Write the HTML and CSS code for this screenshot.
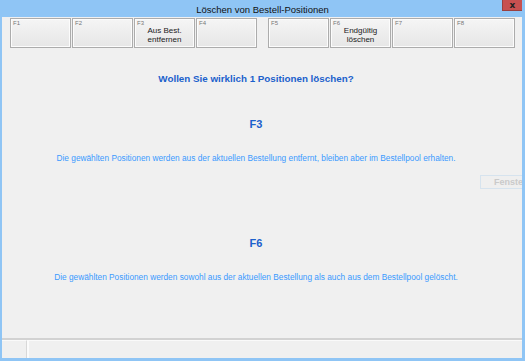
FILE: index.html
```html
<!DOCTYPE html>
<html lang="de">

<head>
    <meta charset="UTF-8">
    <meta name="viewport" content="width=device-width, initial-scale=1.0">
    <title>Löschen von Bestell-Positionen</title>
    <link rel="stylesheet" href="styles.css">
</head>

<body>
    <div class="window">
        <div class="titlebar">
            <span class="title">Löschen von Bestell-Positionen</span>
            <button class="close">x</button>
        </div>

        <div class="keys">
            <button class="key"><span class="fkey">F1</span></button>
            <button class="key"><span class="fkey">F2</span></button>
            <button class="key"><span class="fkey">F3</span><span class="caption">Aus Best.<br>entfernen</span></button>
            <button class="key"><span class="fkey">F4</span></button>
            <button class="key group"><span class="fkey">F5</span></button>
            <button class="key"><span class="fkey">F6</span><span class="caption">Endgültig<br>löschen</span></button>
            <button class="key"><span class="fkey">F7</span></button>
            <button class="key"><span class="fkey">F8</span></button>
        </div>

        <div class="content">
            <h1 class="question">Wollen Sie wirklich 1 Positionen löschen?</h1>
            <h2 class="option">F3</h2>
            <p class="hint">Die gewählten Positionen werden aus der aktuellen Bestellung entfernt, bleiben aber im Bestellpool erhalten.</p>
            <h2 class="option second">F6</h2>
            <p class="hint">Die gewählten Positionen werden sowohl aus der aktuellen Bestellung als auch aus dem Bestellpool gelöscht.</p>
            <button class="fenster" disabled>Fenster</button>
        </div>

        <div class="statusbar">
            <div class="panel small"></div>
            <div class="panel wide"></div>
        </div>
    </div>
</body>

</html>
```

FILE: styles.css
```css
* {
    box-sizing: border-box;
}

body {
    margin: 0;
    padding: 0;
    width: 525px;
    height: 361px;
    overflow: hidden;
    font-family: "Liberation Sans", Arial, sans-serif;
    background-color: #f0f0f0;
}

.window {
    display: flex;
    flex-direction: column;
    width: 525px;
    height: 361px;
    background-color: #f0f0f0;
    border-left: 2px solid #8fc5f5;
    border-right: 3px solid #8fc5f5;
    border-bottom: 3px solid #8fc5f5;
    overflow: hidden;
}

.titlebar {
    display: flex;
    justify-content: center;
    align-items: center;
    position: relative;
    height: 17px;
    margin-left: -2px;
    margin-right: -3px;
    background-color: #8fc5f5;
}

.title {
    font-size: 9.5px;
    color: #111;
    padding-top: 1px;
}

.close {
    position: absolute;
    top: 0;
    right: 2px;
    width: 21px;
    height: 11px;
    padding: 0;
    border: 1px solid #9a4040;
    border-top: none;
    background-color: #c75050;
    color: #222;
    font-family: "DejaVu Sans", sans-serif;
    font-size: 9px;
    font-weight: bold;
    line-height: 9px;
}

.keys {
    display: flex;
    gap: 1px;
    padding: 1px 0 0 8px;
    height: 31px;
}

.key {
    position: relative;
    display: flex;
    justify-content: center;
    align-items: center;
    width: 61px;
    height: 30px;
    padding: 0;
    border: 1px solid #acacac;
    background: linear-gradient(#f5f5f5, #e6e6e6);
    box-shadow: inset 0 0 0 1px #fcfcfc;
}

.key.group {
    margin-left: 10px;
}

.fkey {
    position: absolute;
    top: 1px;
    left: 2px;
    font-size: 6px;
    color: #777;
}

.caption {
    font-size: 8px;
    line-height: 9px;
    color: #1a1a1a;
    padding-top: 4px;
}

.content {
    position: relative;
    flex: 1;
    padding-right: 12px;
    text-align: center;
}

.question {
    margin: 24px 0 0;
    font-size: 9.8px;
    line-height: 14px;
    color: #1b60cc;
}

.option {
    margin: 31px 0 0;
    font-size: 11px;
    line-height: 14px;
    color: #1b60cc;
}

.option.second {
    margin-top: 72px;
}

.hint {
    margin: 21px 0 0;
    font-size: 8.3px;
    line-height: 12px;
    color: #3a9aff;
}

.fenster {
    position: absolute;
    top: 127px;
    left: 478px;
    width: 56px;
    height: 14px;
    padding: 0 0 0 13px;
    text-align: left;
    white-space: nowrap;
    border: 1px solid #d6e3ee;
    background-color: #efefef;
    color: #cacaca;
    font-family: "Liberation Sans", Arial, sans-serif;
    font-size: 9px;
    font-weight: bold;
}

.statusbar {
    display: flex;
    height: 20px;
    border-top: 2px solid #d2d2d2;
}

.panel {
    height: 100%;
    border-top: 1px solid #fafafa;
}

.panel.small {
    width: 25px;
    border-right: 1px solid #d8d8d8;
}

.panel.wide {
    flex: 1;
    border-left: 2px solid #fbfbfb;
}
```
